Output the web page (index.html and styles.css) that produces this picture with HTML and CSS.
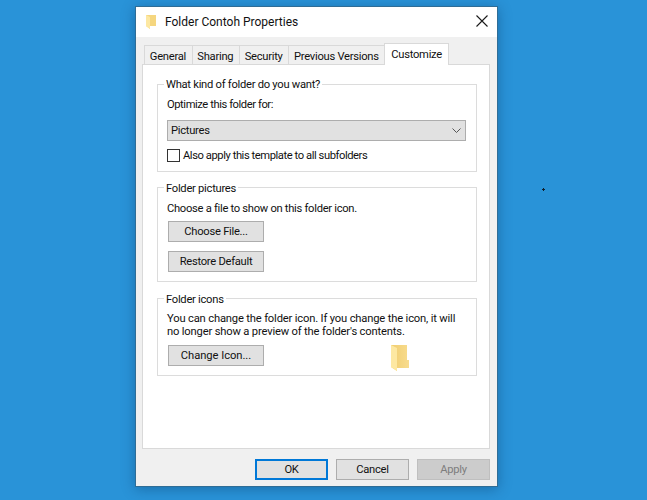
FILE: index.html
```html
<!DOCTYPE html>
<html lang="en">
<head>
<meta charset="utf-8">
<title>Folder Contoh Properties</title>
<link rel="stylesheet" href="styles.css">
</head>
<body>
<span class="speck"></span>
<div class="window">
  <header class="titlebar">
    <svg class="title-icon" width="14" height="16" viewBox="0 0 14 16">
      <path d="M1 1h10v11H5v3L1 12z" fill="#f5d67f"/>
      <path d="M1 1l4 2v12l-4-3z" fill="#fde8a2"/>
    </svg>
    <span class="title-text">Folder Contoh Properties</span>
    <svg class="close" width="12" height="12" viewBox="0 0 12 12">
      <path d="M.5.500l11 11M11.500.500l-11 11" stroke="#1a1a1a" stroke-width="1.100" fill="none"/>
    </svg>
  </header>
  <main class="content">
    <nav class="tabs">
      <span class="tab">General</span>
      <span class="tab">Sharing</span>
      <span class="tab">Security</span>
      <span class="tab">Previous Versions</span>
      <span class="tab tab-active">Customize</span>
    </nav>
    <section class="panel">
      <div class="group group-kind">
        <div class="legend">What kind of folder do you want?</div>
        <div class="label label-tight">Optimize this folder for:</div>
        <div class="select">
          <span>Pictures</span>
          <svg class="arrow" width="9" height="5" viewBox="0 0 9 5"><path d="M.5.500l4 4 4-4" stroke="#555" fill="none"/></svg>
        </div>
        <div class="check-row"><span class="checkbox"></span><span class="label-tight">Also apply this template to all subfolders</span></div>
      </div>
      <div class="group group-pictures">
        <div class="legend">Folder pictures</div>
        <div class="label label-pictures">Choose a file to show on this folder icon.</div>
        <div class="btn btn-wide btn-first">Choose File...</div>
        <div class="btn btn-wide btn-second">Restore Default</div>
      </div>
      <div class="group group-icons">
        <div class="legend">Folder icons</div>
        <div class="label para">You can change the folder icon. If you change the icon, it will<br>no longer show a preview of the folder's contents.</div>
        <div class="btn btn-wide btn-first-icons">Change Icon...</div>
        <svg class="preview" width="18" height="26" viewBox="0 0 18 26">
          <defs>
            <linearGradient id="folderBody" x1="0" x2="1" y1="0" y2="0">
              <stop offset="0" stop-color="#f0cd70"/>
              <stop offset="1" stop-color="#f8dc8e"/>
            </linearGradient>
          </defs>
          <path d="M0 0h16v15h2v8H6v3L0 22z" fill="url(#folderBody)"/>
          <path d="M0 0l6 3v23l-6-4z" fill="#fde8a2"/>
        </svg>
      </div>
    </section>
    <footer class="actions">
      <div class="btn btn-action btn-default">OK</div>
      <div class="btn btn-action btn-cancel">Cancel</div>
      <div class="btn btn-action btn-disabled">Apply</div>
    </footer>
  </main>
</div>
</body>
</html>
```
FILE: styles.css
```css
* { box-sizing: border-box; }
html, body { height: 100%; }
body {
  margin: 0;
  background: #2993d8;
  font-family: "Roboto", "Liberation Sans", sans-serif;
  font-size: 11.200px;
  letter-spacing: -0.270px;
  color: #111;
  overflow: hidden;
  position: relative;
}
.speck {
  position: absolute;
  left: 542px;
  top: 188px;
  width: 3px;
  height: 3px;
  background:
    linear-gradient(#10202c, #10202c) center / 1px 3px no-repeat,
    linear-gradient(#10202c, #10202c) center / 3px 1px no-repeat;
}
.window {
  position: absolute;
  left: 135px;
  top: 6px;
  width: 363px;
  height: 481px;
  background: #f0f0f0;
  border: 1px solid #2f6d96;
  box-shadow: 0 2px 12px rgba(0, 40, 80, .35);
  display: flex;
  flex-direction: column;
}
.titlebar {
  height: 30px;
  background: #fff;
  display: flex;
  align-items: center;
  padding: 0 9px 0 9px;
  flex: none;
}
.title-icon { margin-right: 6px; margin-top: -1px; }
.title-text { flex: 1; font-size: 12px; letter-spacing: 0; color: #111; }
.close { margin-top: -2px; }
.content {
  flex: 1;
  padding: 6px 7px 9px 6px;
  display: flex;
  flex-direction: column;
}
.tabs {
  display: flex;
  height: 22px;
  padding-left: 2px;
  align-items: flex-end;
  flex: none;
  position: relative;
  z-index: 1;
  margin-bottom: -1px;
}
.tab {
  height: 20px;
  line-height: 21px;
  background: #f0f0f0;
  border: 1px solid #d9d9d9;
  border-right: 0;
  padding: 0 5.600px 0 4.800px;
  white-space: nowrap;
}
.tab-active {
  height: 22px;
  line-height: 21px;
  background: #fff;
  border-right: 1px solid #d9d9d9;
  border-bottom: 0;
  padding: 0 6px;
}
.panel {
  height: 385px;
  background: #fff;
  border: 1px solid #d9d9d9;
  padding: 19px 12px 0 14px;
  flex: none;
}
.group {
  border: 1px solid #dcdcdc;
  padding: 0 10px 0 9px;
}
.group-kind { height: 88px; margin-bottom: 15px; }
.group-pictures { height: 95px; margin-bottom: 16px; }
.group-icons { height: 78px; position: relative; }
.legend {
  display: table;
  background: #fff;
  margin: -8px 0 0 -3px;
  padding: 0 2px;
  height: 15px;
  line-height: 15px;
}
.group-pictures .legend, .group-icons .legend { margin-top: -7px; margin-bottom: -1px; }
.label { line-height: 13px; margin-top: 6px; }
.label-tight { letter-spacing: -0.430px; }
.label-pictures { margin-top: 7px; letter-spacing: -0.290px; }
.para { margin-top: 6px; letter-spacing: -0.170px; }
.select {
  height: 21px;
  margin-top: 9px;
  background: #e1e1e1;
  border: 1px solid #adadad;
  display: flex;
  align-items: center;
  justify-content: space-between;
  padding: 0 4px 0 3px;
}
.arrow { margin-right: 0; }
.check-row {
  display: flex;
  align-items: center;
  gap: 3px;
  margin-top: 8px;
  height: 13px;
}
.checkbox {
  width: 13px;
  height: 13px;
  background: #fff;
  border: 1px solid #333;
  flex: none;
}
.btn {
  background: #e1e1e1;
  border: 1px solid #adadad;
  height: 21px;
  display: flex;
  align-items: center;
  justify-content: center;
}
.btn-wide { width: 96px; margin-left: 1px; }
.btn-first { margin-top: 6px; }
.btn-second { margin-top: 9px; }
.btn-first-icons { margin-top: 7px; letter-spacing: -0.050px; }
.preview { position: absolute; left: 233px; top: 46px; }
.actions {
  display: flex;
  justify-content: flex-end;
  gap: 8px;
  margin-top: 10px;
}
.btn-action { width: 73px; border-width: 1px; }
.btn-default { border: 2px solid #0078d7; }
.btn-disabled { background: #cccccc; border-color: #bfbfbf; color: #7d7d7d; }
```
